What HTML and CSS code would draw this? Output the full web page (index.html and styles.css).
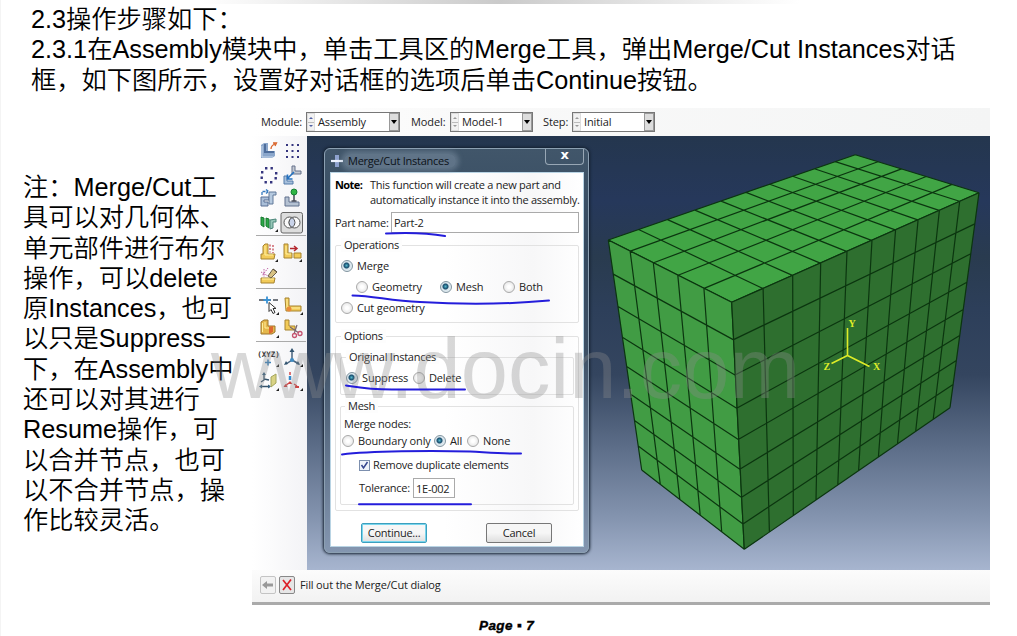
FILE: index.html
```html
<!DOCTYPE html>
<html lang="zh-CN">
<head>
<meta charset="utf-8">
<title>Merge/Cut Instances</title>
<link rel="stylesheet" href="styles.css">
</head>
<body>
<main class="slide">
  <div class="top-shade"></div>
  <header class="intro">
    <p>2.3操作步骤如下：</p>
    <p>2.3.1在Assembly模块中，单击工具区的Merge工具，弹出Merge/Cut Instances对话</p>
    <p>框，如下图所示，设置好对话框的选项后单击Continue按钮。</p>
  </header>
  <div class="columns">
    <aside class="note">
      <p>注：Merge/Cut工</p><p>具可以对几何体、</p><p>单元部件进行布尔</p><p>操作，可以delete</p><p>原Instances，也可</p><p>以只是Suppress一</p><p>下，在Assembly中</p><p>还可以对其进行</p><p>Resume操作，可</p><p>以合并节点，也可</p><p>以不合并节点，操</p><p>作比较灵活。</p>
    </aside>
    <section class="app">
      <div class="context-bar">
        <span class="ctx-label">Module:</span>
        <div class="combo wide blue"><i class="spin"></i><span>Assembly</span><i class="drop"></i></div>
        <span class="ctx-label model">Model:</span>
        <div class="combo"><i class="spin"></i><span>Model-1</span><i class="drop"></i></div>
        <span class="ctx-label step">Step:</span>
        <div class="combo"><i class="spin"></i><span>Initial</span><i class="drop"></i></div>
      </div>
      <div class="workspace">
        <nav class="toolbox">
          <div class="tools g1">
            <svg viewBox="0 0 24 24"><path d="M5 6l3-2h4v8h7v5l-3 2H5z" fill="#8aa6cb"/><path d="M9 5v8h9" fill="none" stroke="#4e6d9b" stroke-width="2"/><path d="M6 7v11h11" fill="none" stroke="#c4d4e8"/><path d="M15 10c0-3 1-4 4-5M17 4h3.500l-1.500 3" fill="none" stroke="#d9642a" stroke-width="1.3"/></svg>
            <svg viewBox="0 0 24 24" fill="#34347e"><path d="M6 5h2v2H6zM11.500 5h2v2h-2zM17 5h2v2h-2zM6 11h2v2H6zM11.500 11h2v2h-2zM17 11h2v2h-2zM6 17h2v2H6zM11.500 17h2v2h-2zM17 17h2v2h-2z"/></svg>
            <svg viewBox="0 0 24 24" fill="#34347e"><path d="M9 4h2.400v2.400H9zM14.500 4h2.400v2.400h-2.400zM19 9h2.400v2.400H19zM18.500 14h2.400v2.400h-2.400zM14 18h2.400v2.400H14zM8.500 18h2.400v2.400H8.500zM4.500 13.500h2.400v2.400H4.500zM5 8h2.400v2.400H5z"/></svg>
            <svg viewBox="0 0 24 24"><path d="M12 3h3v5h6v3h-9z" fill="#c4c9d2" stroke="#65718b"/><path d="M4 13h3v5h6v3H4z" fill="#a8c0dc" stroke="#537aa9"/><path d="M14 9l-6 6M7.500 11.500v4.500h5" fill="none" stroke="#2471bf" stroke-width="1.600"/></svg>
            <svg viewBox="0 0 24 24"><path d="M5 10h8v3h-5v2h4v4H5z" fill="#a9bed8" stroke="#586f94"/><path d="M13 5h7v3h-3v9h-4z" fill="#b5c9df" stroke="#617899"/><path d="M6 8V4.500h6M10 2.500l2.500 2-2.500 2" fill="none" stroke="#377bc0" stroke-width="1.3" stroke-dasharray="3 1"/></svg>
            <svg viewBox="0 0 24 24"><path d="M5 10h4v5h10v4H5z" fill="#b4c1d2" stroke="#60708d"/><path d="M14 7v7M11.500 14h5" stroke="#454a57" stroke-width="1.500"/><circle cx="14" cy="5" r="3" fill="#30b645" stroke="#178036"/></svg>
            <svg viewBox="0 0 24 24"><path d="M5 6l3 1v9l-3-2zM10 7l3 1v9l-3-2z" fill="#2ca847" stroke="#187a31"/><path d="M14 9l6-1v3h-3v6l-3 1z" fill="#95c6b7" stroke="#4b8579"/><path class="corner" d="M22 18v3h-3z"/></svg>
            <svg viewBox="0 0 24 24"><rect x="1" y="1.500" width="21.500" height="20.500" rx="2" fill="#ddd" stroke="#666"/><circle cx="9.500" cy="11.500" r="5.500" fill="#f9f9f9" stroke="#555"/><circle cx="14.500" cy="11.500" r="5.500" fill="#f9f9f9" stroke="#555"/><path d="M12 6.600a5.500 5.500 0 010 9.800 5.500 5.500 0 010-9.800z" fill="#c9d3e9" stroke="#555"/></svg>
          </div>
          <div class="tools g2">
            <svg viewBox="0 0 24 24"><path d="M7 5l2-2h3v10h7l-1 5H5v-5h2z" fill="#f2cb59" stroke="#a68330"/><path d="M9 5v9h8" stroke="#fff0a1" fill="none"/><path d="M14 3.500v8M17 4v8" stroke="#c64b55" stroke-dasharray="2 1.500" stroke-width="1.300"/><path class="corner" d="M22 18v3h-3z"/></svg>
            <svg viewBox="0 0 24 24"><path d="M4 3h4v9h4v5H4zM14 12h7v5h-7z" fill="#f2cb59" stroke="#a68330"/><path d="M6 5v8h5" stroke="#fff0a1" fill="none"/><path d="M10 7.500h6M14 5l3 2.500-3 2.500" fill="none" stroke="#b3262e" stroke-width="1.500"/><path class="corner" d="M22 18v3h-3z"/></svg>
            <svg viewBox="0 0 24 24"><path d="M5 13h14l-1 5H5z" fill="#f2cb59" stroke="#a68330"/><path d="M6 14h12" stroke="#fff0a1"/><path d="M12 11l5-7 4 3-6 6z" fill="#d7c183" stroke="#6b614b"/><path d="M17 4l4 3" stroke="#554c3c"/><path d="M8 4v8M5 7l7 4M12 3l-6 8" stroke="#bf65a8" stroke-dasharray="1.500 1"/></svg>
          </div>
          <div class="tools g3">
            <svg viewBox="0 0 24 24"><path d="M3 5h19" stroke="#454b54" stroke-width="1.500" stroke-dasharray="5 2"/><path d="M11 1.500v7M7.500 5h7" stroke="#3a92d3" stroke-width="1.800"/><path d="M13 7.500v9l2-2 2 4 2-1-2-4h3z" fill="#fff" stroke="#333"/><path class="corner" d="M23 17v3h-3z"/></svg>
            <svg viewBox="0 0 24 24"><path d="M5 3h4v8h12v5H6z" fill="#f2cb59" stroke="#a68330"/><path d="M7 4v9h13" fill="none" stroke="#fff0a1"/><circle cx="9" cy="14" r="2.500" fill="#e98b38"/><path class="corner" d="M23 17v3h-3z"/></svg>
            <svg viewBox="0 0 24 24"><path d="M5 4l3-2h4v6h7v6l-3 2H5z" fill="#e5b74b" stroke="#9a752c"/><path d="M6.500 5v9M9 4v6h5" fill="none" stroke="#fff09d"/><path d="M13 9l4-1v6l-4 2z" fill="#dd6831"/><path class="corner" d="M23 17v3h-3z"/></svg>
            <svg viewBox="0 0 24 24"><path d="M5 2h4v6h6v4H5z" fill="#f2cb59" stroke="#a68330"/><path d="M10 9l9 6M17 7l-3 9" stroke="#776570" stroke-width="1.200"/><g fill="none" stroke="#c65370" stroke-width="1.300"><circle cx="14.500" cy="17.500" r="2"/><circle cx="20" cy="15.500" r="2"/></g></svg>
          </div>
          <div class="tools g4">
            <svg viewBox="0 0 24 24"><text class="xyz" x="12.500" y="10" text-anchor="middle">(XYZ)</text><path d="M12 12.500v6M9 15.500h6" stroke="#3b83bd" stroke-width="1.500"/><path class="corner" d="M23 17v3h-3z"/></svg>
            <svg viewBox="0 0 24 24"><path d="M12 3v10l-6 4M12 13l7 4" stroke="#48647f" stroke-width="1.500" fill="none"/><path d="M12 1l2.500 4h-5zM4 18l2-4 2 3zM20 18l-4-1 2-3z" fill="#31536f"/><circle cx="12" cy="13" r="2" fill="#408bc2"/><path class="corner" d="M23 17v3h-3z"/></svg>
            <svg viewBox="0 0 24 24"><path d="M8 3v6l-3 2M8 8l5 1M5 15.500h9" fill="none" stroke="#37546c" stroke-width="1.300"/><path d="M6 4l2-3 2 3zM3 15.500l3-2v4zM15 15.500l-3-2v4z" fill="#345f7e"/><path d="M15 6l5-3v9l-5 4z" fill="#d9d385" stroke="#a4a55c"/><path class="corner" d="M23 17v3h-3z"/></svg>
            <svg viewBox="0 0 24 24"><path d="M10 1v3M5 15l4-3M14 13l3 2" stroke="#d34a4a" stroke-width="1.500" fill="none"/><path d="M10 5v4" stroke="#3389cb" stroke-width="2.500"/><path d="M7.500 13l2.500-3 2.500 3zM3.500 16l2-3 2 3zM15 15h4v2h-4z" fill="#cf4343"/><path class="corner" d="M23 17v3h-3z"/></svg>
          </div>
        </nav>
        <div class="viewport">
          <svg class="mesh" viewBox="307 136 683 434">
            <g id="faces"></g>
            <g class="triad"><path d="M847.500 328v27.500l-16 8M847.500 355.500l22 11"/><text x="848.500" y="327">Y</text><text x="823.500" y="369.500">Z</text><text x="873" y="369.500">X</text></g>
          </svg>
          <div class="dialog">
            <div class="titlebar"><svg class="plus" viewBox="0 0 14 14"><path d="M7 1v12" stroke="#8ea2cf" stroke-width="4"/><path d="M1 7h12" stroke="#eef3ff" stroke-width="2.200"/></svg><span class="title">Merge/Cut Instances</span><span class="close">x</span></div>
            <div class="client">
              <div class="message"><b>Note:</b><div><p>This function will create a new part and</p><p>automatically instance it into the assembly.</p></div></div>
              <div class="part"><label>Part name:</label><div class="field">Part-2</div></div>
              <div class="group operations">
                <span class="legend">Operations</span>
                <div class="row tall"><span class="radio on">Merge</span></div>
                <div class="row inset"><span class="radio r-geo">Geometry</span><span class="radio on r-mesh">Mesh</span><span class="radio">Both</span></div>
                <div class="row tall"><span class="radio">Cut geometry</span></div>
              </div>
              <div class="group options">
                <span class="legend">Options</span>
                <div class="group original"><span class="legend">Original Instances</span><div class="row tall"><span class="radio on r-sup">Suppress</span><span class="radio">Delete</span></div></div>
                <div class="group meshbox"><span class="legend">Mesh</span>
                  <div class="row nodes">Merge nodes:</div>
                  <div class="row bounds"><span class="radio r-bound">Boundary only</span><span class="radio on r-all">All</span><span class="radio">None</span></div>
                  <div class="row remove"><svg class="check" viewBox="0 0 11 11"><rect x=".5" y=".5" width="10" height="10" fill="#eef2fa" stroke="#7c8fae"/><path d="M2.500 5l2 3 4-6" fill="none" stroke="#35468f" stroke-width="1.500"/></svg><span>Remove duplicate elements</span></div>
                  <div class="row tol"><span>Tolerance:</span><div class="field small">1E-002</div></div>
                </div>
              </div>
              <div class="buttons"><div class="btn default">Continue...</div><div class="btn">Cancel</div></div>
            </div>
          </div>
        </div>
      </div>
      <div class="prompt">
        <svg class="pbtn" viewBox="0 0 16 18"><rect x=".5" y=".5" width="15" height="17" rx="1.500" fill="#f2f2f2" stroke="#c4c4c4"/><path d="M2 9l5-4v2.500h6v3H7V13z" fill="#999"/></svg>
        <svg class="pbtn" viewBox="0 0 16 18"><rect x=".5" y=".5" width="15" height="17" rx="1.500" fill="#e6e6e6" stroke="#888"/><path d="M4 4l8 10M12 3.500L4 14" stroke="#dc2029" stroke-width="1.700"/></svg>
        <span>Fill out the Merge/Cut dialog</span>
      </div>
    </section>
  </div>
  <footer class="page-no">Page ▪ 7</footer>
  <div class="watermark">www.docin.com</div>
  <svg class="marks" viewBox="0 0 1017 636"><path d="M386 233.500C405 232.500 425 232.500 445 236M352.500 295.500C375 296 390 301 420 302 460 304.500 500 305 549 300.500M346 385.500C362 388 370 389.500 392 389.500L465 389.500M342 454.500C370 451 430 450.500 470 451.500 495 453 505 454 521 453.500M359 504.300H471"/></svg>
</main>
<script src="mesh.js"></script>
</body>
</html>
```

FILE: styles.css
```css
* { box-sizing: border-box; }
body { margin: 0; background: #fff; }
p { margin: 0; }
.slide { position: relative; width: 1017px; height: 636px; overflow: hidden; background: #fff; display: flex; flex-direction: column; box-shadow: inset 1px 0 #f4f4f4; }
.top-shade { height: 4px; margin-left: 200px; width: 600px; flex: none; background: linear-gradient(90deg, #fff, #bdbdbd 50%, #fff); opacity: .8; }
.intro, .note { font: 350 25.25px/30.3px "Liberation Sans", "Noto Sans CJK SC", sans-serif; color: #000; white-space: nowrap; }
.intro { height: 104px; padding-left: 31px; flex: none; }
.columns { display: flex; height: 497px; flex: none; }
.note { width: 252px; padding: 64px 0 0 23px; flex: none; }
.app { width: 738px; height: 497px; border-bottom: 3px solid #aaa; display: flex; flex-direction: column; font: 11px/14px "Open Sans", "Noto Sans", sans-serif; letter-spacing: -.25px; color: #222; white-space: nowrap; }
.context-bar { height: 28px; flex: none; display: flex; align-items: center; padding-left: 9px; background: linear-gradient(90deg, #fff, #f9f9f9 30%, #f4f5f5); }
.ctx-label { width: 45px; letter-spacing: -.1px; }
.ctx-label.model { width: 39px; margin-left: 11px; }
.ctx-label.step { width: 29px; margin-left: 10px; }
.combo { width: 83px; height: 20px; border: 1px solid #777; background: #fff; display: flex; align-items: center; letter-spacing: -.1px; }
.combo.wide { width: 94px; }
.combo span { flex: 1; padding-left: 3px; }
.spin { width: 8px; height: 18px; background: linear-gradient(#bbb, #bbb) 50% 50%/7px 1px no-repeat #f2f2f2; display: flex; flex-direction: column; align-items: center; justify-content: space-around; border: 1px solid #ddd; }
.spin::before, .spin::after { content: ""; border: 2px solid transparent; }
.spin::before { border-bottom-color: #999; border-top: 0; }
.spin::after { border-top-color: #999; border-bottom: 0; }
.blue .spin::before { border-bottom-color: #5262a5; }
.blue .spin::after { border-top-color: #5262a5; }
.drop { width: 10px; height: 18px; border: 1px solid #999; background: #ddd; display: flex; align-items: center; justify-content: center; }
.drop::before { content: ""; border: 3px solid transparent; border-top: 4px solid #000; border-bottom: 0; }
.workspace { display: flex; height: 434px; flex: none; }
.toolbox { width: 55px; flex: none; padding-top: 3px; background: linear-gradient(90deg, #fff, #f3f3f6); }
.tools { display: grid; grid-template-columns: 24px 24px; grid-auto-rows: 24px; margin: 0 1px 0 4px; border-bottom: 1px solid #aaa; }
.tools svg { width: 24px; height: 24px; }
.g1 { height: 97px; }
.g2 { height: 53px; padding-top: 5px; }
.g3 { height: 53px; padding-top: 6px; grid-auto-rows: 23px; }
.g4 { padding-top: 5px; border: 0; }
.corner { fill: #222; }
.xyz { font: bold 7.5px "DejaVu Sans Mono", monospace; letter-spacing: 0; fill: #333; }
.viewport { position: relative; width: 683px; height: 434px; background: linear-gradient(#24364e 0, #26385b 15%, #293b4f 28%, #2d3f5a 40%, #34455f 55%, #5d6e89 72%, #8494af 88%, #a7b5cf); }
.mesh { display: block; width: 683px; height: 434px; }
.triad path { fill: none; stroke: #dfec28; stroke-width: 1.6; }
.triad text { font: bold 10px "Liberation Serif", serif; fill: #dfec28; }
.dialog { position: absolute; left: 17px; top: 12px; width: 265px; height: 405px; padding: 0 4px 5px 5px; border: 1px solid #8ca0b2; border-radius: 6px; background: linear-gradient(#41566a, #34495f 25%, #3d5065 50%, #8496b0); box-shadow: 0 0 3px 1px #14202f; }
.titlebar { height: 23px; display: flex; align-items: center; }
.plus { width: 14px; height: 14px; }
.title { padding: 0 7px 0 4px; border-radius: 7px; color: #0c1218; background: rgba(140,160,178,.42); box-shadow: 0 0 5px 3px rgba(140,160,178,.42); }
.close { width: 39px; height: 16px; margin: 0 0 7px auto; border: 1px solid #98a7b5; border-top: 0; border-radius: 0 0 4px 4px; color: #fff; font: bold 13px/12px "DejaVu Sans", sans-serif; text-align: center; }
.client { height: 375px; background: linear-gradient(90deg, #fff 45%, #f7f7f8 80%, #fff); border: 1px solid #b9d4e4; padding: 5px 4px 0 4px; }
.message { display: flex; height: 29px; line-height: 14.5px; }
.message b { flex: 0 0 35px; letter-spacing: -.6px; color: #000; }
.part { margin-top: 5px; display: flex; align-items: center; height: 21px; }
.part label { width: 56px; }
.field { height: 21px; flex: 1; border: 1px solid #aaa; background: #fff; padding: 3px 2px; }
.group { border: 1px solid #e2e2e2; border-radius: 2px; }
.legend { display: block; width: fit-content; height: 14px; margin: -8px 0 0 5px; padding: 0 3px; background: #fdfdfd; }
.operations { height: 78px; margin-top: 12px; }
.row { display: flex; align-items: center; height: 14px; padding-left: 5px; }
.row.tall { height: 28px; }
.row.inset { padding-left: 20px; }
.radio { display: flex; align-items: center; gap: 4px; letter-spacing: -.15px; }
.radio::before { content: ""; width: 10px; height: 10px; flex: none; border-radius: 50%; border: 1px solid #aaa; background: radial-gradient(#fff 20%, #ddd); }
.radio.on::before { border-color: #8295a0; background: radial-gradient(circle at 45% 45%, #53b6ca 0, #164a6b 2.5px, #d5e3ea 3.5px, #f0f5f8); }
.r-geo { width: 84px; }
.r-mesh { width: 63px; }
.options { height: 175px; margin-top: 13px; padding: 0 4px; }
.options > .legend { margin-left: 1px; }
.original { height: 38px; margin-top: 14px; }
.r-sup { width: 67px; }
.meshbox { height: 99px; margin-top: 11px; }
.meshbox > .legend { margin-left: 4px; }
.nodes { height: 21px; padding-left: 3px; }
.bounds { padding-left: 1px; }
.r-bound { width: 92px; }
.r-all { width: 33px; }
.remove { height: 28px; padding: 6px 0 0 18px; gap: 3px; }
.check { width: 11px; height: 11px; }
.tol { height: 24px; padding-left: 18px; }
.tol > span { width: 54px; }
.small { flex: none; width: 42px; height: 20px; }
.buttons { margin-top: 12px; padding-left: 26px; display: flex; gap: 59px; }
.btn { width: 66px; height: 20px; border: 1px solid #777; border-radius: 2px; background: linear-gradient(#f6f6f6 50%, #dedede); text-align: center; line-height: 18px; }
.btn.default { border-color: #3c9fbe; box-shadow: inset 0 0 0 1px #79d5ed; }
.prompt { height: 32px; flex: none; display: flex; align-items: center; padding: 0 0 2px 8px; background: linear-gradient(#fcfcfc, #f2f2f2); gap: 3px; letter-spacing: -.15px; }
.pbtn { width: 16px; height: 18px; }
.prompt span { margin-left: 2px; }
.page-no { margin: 13px 0 0 479px; font: italic bold 13.5px/16px "Liberation Sans", sans-serif; letter-spacing: .4px; color: #000; -webkit-text-stroke: .4px #000; }
.watermark { position: absolute; left: 211px; top: 320px; font: 84.8px/97px "Liberation Sans", sans-serif; color: rgba(140,140,140,.34); white-space: nowrap; }
.marks { position: absolute; left: 0; top: 0; width: 1017px; height: 636px; pointer-events: none; }
.marks path { fill: none; stroke: #241ddb; stroke-width: 2; stroke-linecap: round; }
```

FILE: mesh.js
```js
// Perspective subdivision of the solid's three visible faces.
const A = [608.3, 240], B = [855.3, 154.7], C = [979, 192.7], D = [731.7, 302.3];
const E = [744.3, 549.3], F = [641.7, 470], G = [950, 407.7];

function projector([x0, y0], [x1, y1], [x2, y2], [x3, y3]) {
  const dx1 = x1 - x2, dx2 = x3 - x2, dx3 = x0 - x1 + x2 - x3;
  const dy1 = y1 - y2, dy2 = y3 - y2, dy3 = y0 - y1 + y2 - y3;
  const det = dx1 * dy2 - dx2 * dy1;
  const g = (dx3 * dy2 - dx2 * dy3) / det, h = (dx1 * dy3 - dx3 * dy1) / det;
  return (u, v) => {
    const w = g * u + h * v + 1;
    return [((x1 - x0 + g * x1) * u + (x3 - x0 + h * x3) * v + x0) / w,
            ((y1 - y0 + g * y1) * u + (y3 - y0 + h * y3) * v + y0) / w];
  };
}

function face(corners, cols, rows, color) {
  const at = projector(...corners);
  const line = (a, b) => `M${a.map(n => n.toFixed(1))}L${b.map(n => n.toFixed(1))}`;
  let d = "";
  for (let i = 0; i <= cols; i++) d += line(at(i / cols, 0), at(i / cols, 1));
  for (let j = 0; j <= rows; j++) d += line(at(0, j / rows), at(1, j / rows));
  return `<polygon points="${corners.join(" ")}" fill="${color}"/><path d="${d}" stroke="#0b350f" stroke-width="1.2"/>`;
}

document.getElementById("faces").innerHTML =
  face([A, B, C, D], 10, 5, "#41a545") +
  face([A, D, E, F], 5, 8, "#419c44") +
  face([D, C, G, E], 10, 8, "#2e6f2f");
```
